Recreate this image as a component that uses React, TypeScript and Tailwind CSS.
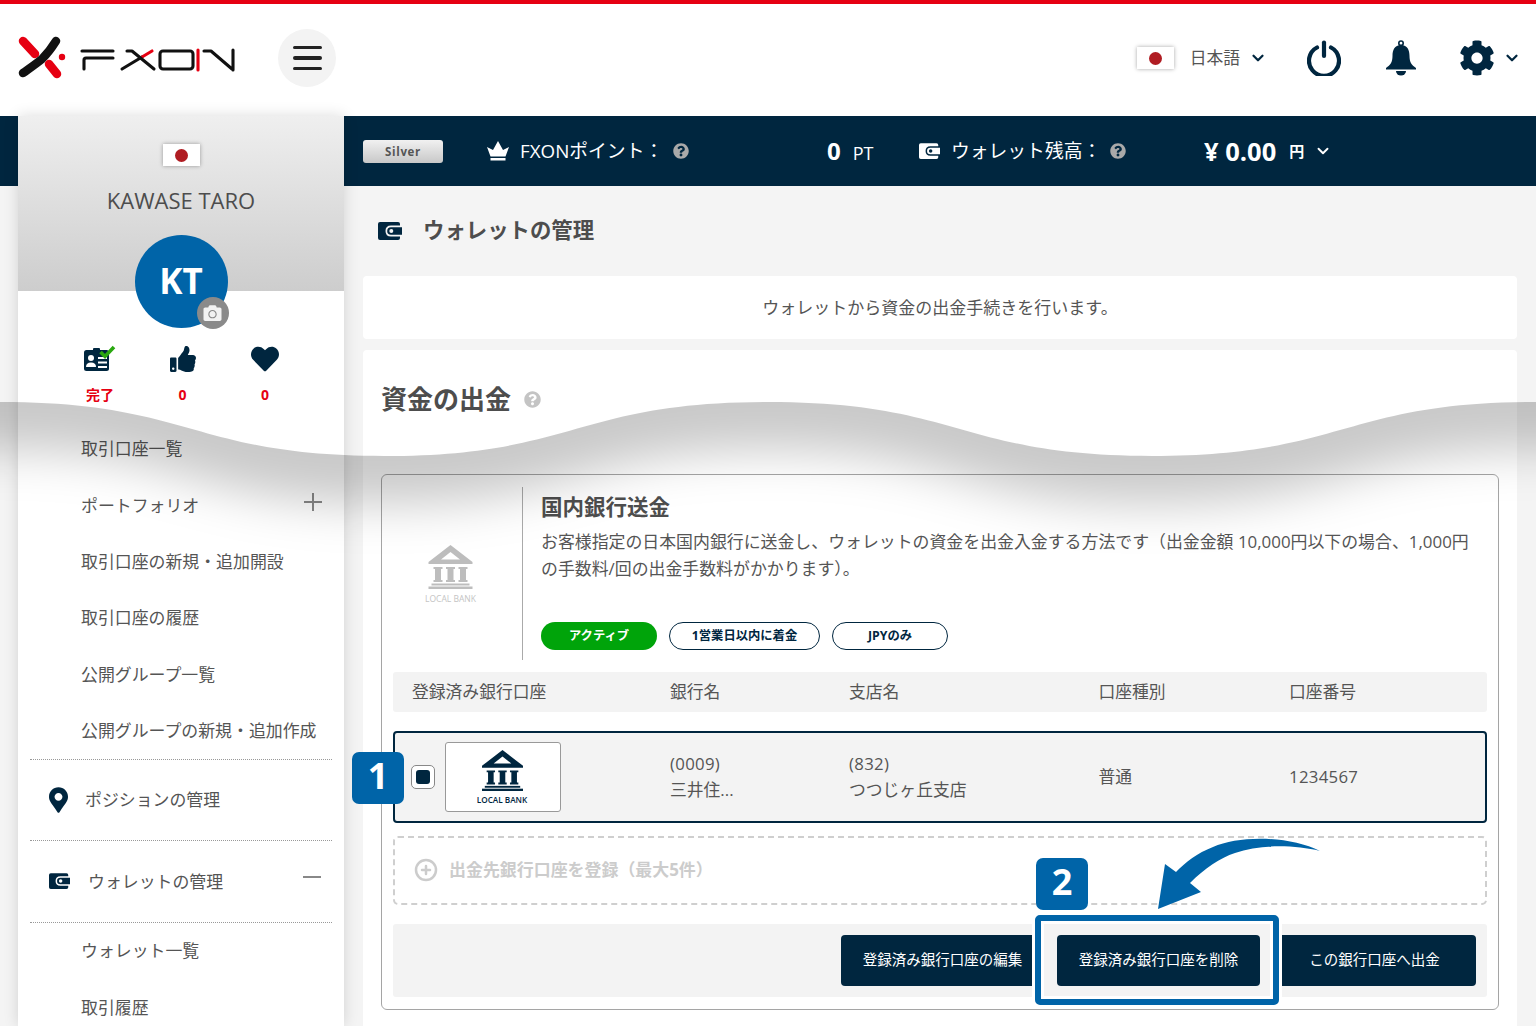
import { ChevronDown, CirclePlus } from "lucide-react";
import { FaCamera, FaCog, FaHeart, FaMapMarkerAlt, FaQuestionCircle, FaThumbsUp } from "react-icons/fa";

const NAVY = "#00263f";

function Flag() {
  return (
    <span className="flex h-[22px] w-[37px] items-center justify-center bg-white shadow-[0_0_4px_rgba(0,0,0,0.35)]">
      <span className="h-[13px] w-[13px] rounded-full bg-[#b01c22]" />
    </span>
  );
}

function Logo() {
  return (
    <svg width="220" height="46" viewBox="0 0 220 46" fill="none" role="img" aria-label="FXON">
      <g strokeLinecap="round" strokeWidth="8.5">
        <path d="M5 6 L17 19" stroke="#e60012" />
        <path d="M38 6 C33 14 29 19 24 24 C18 29 12 33 5 38" stroke="#111" />
        <path d="M31 29 L39 39" stroke="#e60012" />
      </g>
      <circle cx="44" cy="22" r="3.2" fill="#e60012" />
      <g strokeWidth="3.1" strokeLinecap="round" strokeLinejoin="round" transform="translate(0,-2)">
        <path d="M64 18 H95" stroke="#111" />
        <path d="M66 36 V27 Q66 25 68 25 H95" stroke="#111" />
        <path d="M104 36 L124 24" stroke="#111" />
        <path d="M124 24 L134 18" stroke="#e60012" />
        <path d="M109 18 H114 L136 36" stroke="#111" />
        <rect x="142" y="18" width="33" height="18" rx="3" stroke="#111" />
        <path d="M180 17 V37" stroke="#e60012" />
        <path d="M186 18 H193 L214 36 M215 17 V37" stroke="#111" />
      </g>
    </svg>
  );
}

function Wallet({ className, cut = NAVY, color = NAVY }: { className?: string; cut?: string; color?: string }) {
  return (
    <svg className={className} viewBox="0 0 24 18" aria-hidden="true">
      <path d="M2 0 H20 Q22 0 22 2 V3.500 H13 Q7.500 3.500 7.500 9 Q7.500 14.500 13 14.500 H22 V16 Q22 18 20 18 H2 Q0 18 0 16 V2 Q0 0 2 0Z" fill={color} />
      <path d="M13 5.200 H24 V12.800 H13 Q9.200 12.800 9.200 9 Q9.200 5.200 13 5.200Z" fill={color} />
      <circle cx="13.300" cy="9" r="2" fill={cut} />
    </svg>
  );
}

function Bank({ className, color }: { className?: string; color: string }) {
  return (
    <svg className={className} viewBox="0 0 44 44" fill={color} aria-hidden="true">
      <path fillRule="evenodd" d="M22 0 L44 17 V19 H0 V17 Z M22 7 L12.500 14.500 H31.500 Z" />
      <path d="M5 22 H14 V24 H12.500 V35 H14 V37 H5 V35 H6.500 V24 H5Z M17.500 22 H26.500 V24 H25 V35 H26.500 V37 H17.500 V35 H19 V24 H17.500Z M30 22 H39 V24 H37.500 V35 H39 V37 H30 V35 H31.500 V24 H30Z" />
      <rect x="3" y="38.500" width="38" height="2" />
      <rect y="41.500" width="44" height="2.500" />
    </svg>
  );
}

function IdCard() {
  return (
    <svg width="32" height="28" viewBox="0 0 32 28" aria-hidden="true">
      <rect x="0" y="5" width="25" height="21" rx="2.500" fill={NAVY} />
      <rect x="9" y="3" width="7" height="3" rx="1" fill={NAVY} />
      <circle cx="7" cy="13" r="3" fill="#fff" />
      <path d="M2 22 Q2 17.500 7 17.500 Q12 17.500 12 22Z" fill="#fff" />
      <path d="M14 13 H23 M14 17.500 H23 M14 22 H23" stroke="#fff" strokeWidth="1.800" />
      <path d="M16.500 7 L21 11.500 L30 2" fill="none" stroke="#2aa810" strokeWidth="3.600" />
    </svg>
  );
}

function Crown() {
  return (
    <svg width="22" height="20" viewBox="0 0 22 20" fill="#fff" aria-hidden="true">
      <path d="M0 6 L6 9 L11 0 L16 9 L22 6 L18.500 15.500 H3.500Z" />
      <rect x="3.500" y="17" width="15" height="2.500" />
    </svg>
  );
}

function Power() {
  return (
    <svg width="34" height="36" viewBox="0 0 34 36" fill="none" stroke={NAVY} strokeWidth="4.200" strokeLinecap="round" aria-hidden="true">
      <path d="M17 2.500 V16" />
      <path d="M10 7.500 A15 15 0 1 0 24 7.500" />
    </svg>
  );
}

function Bell() {
  return (
    <svg width="32" height="36" viewBox="0 0 32 36" aria-hidden="true">
      <circle cx="16" cy="3.200" r="2.200" fill="none" stroke={NAVY} strokeWidth="1.600" />
      <path d="M16 5 C9.500 5 7.500 10 7.500 16 C7.500 22 5.500 25 1 28 V29.500 H31 V28 C26.500 25 24.500 22 24.500 16 C24.500 10 22.500 5 16 5Z" fill={NAVY} />
      <path d="M11 31 H21 A5 4.500 0 0 1 11 31Z" fill={NAVY} />
    </svg>
  );
}

function SubItem({ label, extra }: { label: string; extra?: React.ReactNode }) {
  return (
    <div className="flex h-[56.300px] items-center justify-between pl-[63px] pr-[22px] text-[16.900px]">
      <span>{label}</span>
      {extra}
    </div>
  );
}

function Sidebar() {
  return (
    <aside className="relative z-10 h-[910px] w-[326px] shrink-0 bg-white shadow-[0_0_14px_rgba(0,0,0,0.14)]">
      <div className="flex h-[175px] flex-col items-center bg-gradient-to-b from-[#efefef] to-[#cdcdcd] pt-[28px]">
        <Flag />
        <p className="mt-[19px] text-[22px] leading-[30px] text-[#4d4d4d]">KAWASE TARO</p>
      </div>
      <div className="relative mx-auto -mt-[56px] flex h-[93px] w-[93px] items-center justify-center rounded-full bg-[#0064a8] text-[35px] font-bold text-white">
        KT
        <span className="absolute -bottom-[1px] -right-[1px] flex h-[32px] w-[32px] items-center justify-center rounded-full bg-[#8a8a8a]">
          <FaCamera className="h-[18px] w-[19px] text-[#f2f2f2]" />
        </span>
      </div>
      <div className="ml-[3px] mt-[15px] flex justify-center text-[14px] font-bold text-[#e60012]">
        {[
          { icon: <IdCard />, label: "完了" },
          { icon: <FaThumbsUp className="h-[26px] w-[26px] text-[#00263f]" />, label: "0" },
          { icon: <FaHeart className="h-[28px] w-[28px] text-[#00263f]" />, label: "0" },
        ].map((s, i) => (
          <div key={i} className="flex w-[82.500px] flex-col items-center">
            <div className="flex h-[32px] items-center">{s.icon}</div>
            <span className="mt-[10px] leading-[20px]">{s.label}</span>
          </div>
        ))}
      </div>
      <div className="mt-[16px]">
        <SubItem label="取引口座一覧" />
        <SubItem label="ポートフォリオ" extra={<span className="relative -top-[3px] h-[18px] w-[18px] bg-[linear-gradient(#888,#888),linear-gradient(#888,#888)] bg-[length:18px_2px,2px_18px] bg-center bg-no-repeat" />} />
        <SubItem label="取引口座の新規・追加開設" />
        <SubItem label="取引口座の履歴" />
        <SubItem label="公開グループ一覧" />
        <SubItem label="公開グループの新規・追加作成" />
      </div>
      <div className="mx-[12px] flex h-[82px] items-center border-y border-dotted border-[#999] pl-[19px] text-[16.900px]">
        <FaMapMarkerAlt className="h-[26px] w-[19px] text-[#00263f]" />
        <span className="ml-[17px]">ポジションの管理</span>
      </div>
      <div className="mx-[12px] flex h-[82px] items-center border-b border-dotted border-[#999] pl-[19px] pr-[11px] text-[16.900px]">
        <Wallet className="h-[16px] w-[21px]" cut="#fff" />
        <span className="ml-[18px] flex-1">ウォレットの管理</span>
        <span className="relative -top-[4px] h-[2px] w-[18px] bg-[#888]" />
      </div>
      <div>
        <SubItem label="ウォレット一覧" />
        <SubItem label="取引履歴" />
      </div>
    </aside>
  );
}

function Pill({ label, active }: { label: string; active?: boolean }) {
  return (
    <span className={active
      ? "flex h-[28px] w-[116px] items-center justify-center rounded-full bg-[#00a40a] pt-[1px] text-[12.300px] font-bold text-white"
      : "flex h-[28px] items-center justify-center rounded-full border border-[#00263f] bg-white pt-[1px] text-[12.300px] font-bold text-[#00263f]"}>
      {label}
    </span>
  );
}

function ActionButton({ label, highlight }: { label: string; highlight?: boolean }) {
  return (
    <div className={`relative flex h-[51px] w-[203px] items-center justify-center rounded-[4px] bg-[#00263f] pb-[2px] text-[14.500px] text-white ${highlight ? "z-10" : ""}`}>
      {label}
      {highlight && (
        <span className="pointer-events-none absolute -bottom-[19px] -left-[22px] -right-[19px] -top-[20px] rounded-[5px] border-[6px] border-[#0064a8] shadow-[0_0_0_3px_#fff,inset_0_0_0_3px_#fff]" />
      )}
    </div>
  );
}

function NumberBadge({ n, className }: { n: string; className: string }) {
  return (
    <span className={`absolute flex h-[52px] w-[52px] items-center justify-center rounded-[7px] bg-[#0064a8] pb-[4px] text-[36px] font-bold text-white ${className}`}>
      {n}
    </span>
  );
}

function TopBand() {
  return (
    <div className="flex h-[70px] items-center bg-[#00263f] pl-[19px] text-white">
      <span className="flex h-[23px] w-[80px] items-center justify-center rounded-[3px] bg-gradient-to-b from-[#f1f1f1] to-[#c8c8c8] pt-[2px] text-[11.500px] font-bold tracking-[0.06em] text-[#555]">Silver</span>
      <div className="ml-[44px] flex w-[340px] items-center">
        <Crown />
        <span className="ml-[11px] text-[18.800px]">FXONポイント：</span>
        <FaQuestionCircle className="ml-[10px] h-[16px] w-[16px] text-[#a9a9a9]" />
      </div>
      <div className="flex w-[92px] items-baseline">
        <span className="text-[24px] font-bold">0</span>
        <span className="ml-[12px] text-[18px]">PT</span>
      </div>
      <div className="flex w-[285px] items-center">
        <Wallet className="h-[16px] w-[21px]" cut={NAVY} color="#fff" />
        <span className="ml-[11px] text-[18.800px]">ウォレット残高：</span>
        <FaQuestionCircle className="ml-[9px] h-[16px] w-[16px] text-[#a9a9a9]" />
      </div>
      <div className="flex items-center">
        <span className="text-[25.500px] font-bold">¥ 0.00</span>
        <span className="ml-[13px] text-[15px] font-bold">円</span>
        <ChevronDown className="ml-[10px] h-[18px] w-[18px]" strokeWidth={2.500} />
      </div>
    </div>
  );
}

function WithdrawPanel() {
  return (
    <section className="mt-[11px] rounded-t-[4px] bg-white px-[18px]">
      <div className="flex h-[124px] items-start pt-[29px]">
        <h2 className="text-[26px] font-bold leading-[40px] text-[#4d4d4d]">資金の出金</h2>
        <FaQuestionCircle className="ml-[13px] mt-[12px] h-[17px] w-[17px] text-[#c4c4c4]" />
      </div>
      <div className="h-[536px] rounded-[6px] border border-[#a5a5a5] px-[11px]">
        <div className="flex h-[197px] pt-[12px]">
          <div className="-ml-[11px] flex h-[173px] w-[141px] shrink-0 flex-col items-center justify-center border-r border-[#aaa] pr-[3px] pt-[2px]">
            <Bank className="h-[44px] w-[47px]" color="#bdbdbd" />
            <span className="mt-[4px] text-[8.500px] leading-[12px] text-[#c4c4c4]">LOCAL BANK</span>
          </div>
          <div className="ml-[18px] flex-1">
            <h3 className="text-[21.500px] font-bold leading-[40px] text-[#4d4d4d]">国内銀行送金</h3>
            <p className="mt-[2px] w-[935px] text-[16.900px] leading-[26.500px]">
              お客様指定の日本国内銀行に送金し、ウォレットの資金を出金入金する方法です（出金金額 10,000円以下の場合、1,000円の手数料/回の出金手数料がかかります）。
            </p>
            <div className="mt-[40px] flex gap-[12px]">
              <Pill label="アクティブ" active />
              <span className="w-[151px]"><Pill label="1営業日以内に着金" /></span>
              <span className="w-[116px]"><Pill label="JPYのみ" /></span>
            </div>
          </div>
        </div>

        <div className="flex h-[40px] items-center rounded-[3px] bg-[#f3f3f3] pl-[19px] text-[16.800px]">
          <span className="w-[258px]">登録済み銀行口座</span>
          <span className="w-[179px]">銀行名</span>
          <span className="w-[249.500px]">支店名</span>
          <span className="w-[190.500px]">口座種別</span>
          <span>口座番号</span>
        </div>

        <div className="relative mt-[19px] flex h-[92px] items-center rounded-[4px] border-2 border-[#00263f] bg-[#f3f3f3] text-[16.800px]">
          <NumberBadge n="1" className="-left-[43px] top-[19px]" />
          <span className="ml-[16px] flex h-[24px] w-[24px] items-center justify-center rounded-[5px] border border-[#888] bg-white">
            <span className="h-[14px] w-[14px] rounded-[3px] bg-[#00263f]" />
          </span>
          <div className="ml-[10px] flex h-[70px] w-[116px] flex-col items-center justify-center rounded-[3px] border border-[#999] bg-white pr-[2px] pt-[2px]">
            <Bank className="h-[41px] w-[45px]" color={NAVY} />
            <span className="mt-[3px] text-[8.200px] font-semibold leading-[12px] text-[#00263f]">LOCAL BANK</span>
          </div>
          <div className="ml-[109px] w-[179px] leading-[26px]">
            <div className="tracking-[0.3px]">(0009)</div>
            <div>三井住...</div>
          </div>
          <div className="w-[249.500px] leading-[26px]">
            <div className="tracking-[0.3px]">(832)</div>
            <div>つつじヶ丘支店</div>
          </div>
          <span className="w-[190.500px]">普通</span>
          <span className="tracking-[0.3px]">1234567</span>
        </div>

        <div className="mt-[13px] flex h-[69px] items-center rounded-[5px] border-2 border-dashed border-[#cfcfcf] pb-[2px] pl-[19px] text-[#cccccc]">
          <CirclePlus className="h-[24px] w-[24px]" strokeWidth={2.500} />
          <span className="ml-[11px] text-[16.950px] font-bold">出金先銀行口座を登録（最大5件）</span>
        </div>

        <div className="mt-[19px] flex h-[73px] items-center justify-end gap-[13px] rounded-[3px] bg-[#f3f3f3] pr-[11px]">
          <ActionButton label="登録済み銀行口座の編集" />
          <ActionButton label="登録済み銀行口座を削除" highlight />
          <ActionButton label="この銀行口座へ出金" />
        </div>
      </div>
      <div className="h-[20px]" />
    </section>
  );
}

export default function App() {
  return (
    <div className="relative h-[1026px] w-[1536px] overflow-hidden bg-[#f4f4f4] [font-family:'Open_Sans','Noto_Sans_CJK_JP',sans-serif] text-[#555]">
      <header className="flex h-[116px] items-center border-t-4 border-[#e60012] bg-white pb-[4px]">
        <div className="ml-[18px]"><Logo /></div>
        <button className="ml-[40px] flex h-[58px] w-[58px] flex-col items-center justify-center gap-[7px] rounded-full bg-[#f3f3f3]">
          <span className="h-[3.500px] w-[29px] rounded-full bg-[#222]" />
          <span className="h-[3.500px] w-[29px] rounded-full bg-[#222]" />
          <span className="h-[3.500px] w-[29px] rounded-full bg-[#222]" />
        </button>
        <div className="ml-auto flex items-center">
          <Flag />
          <span className="ml-[16px] text-[16.800px]">日本語</span>
          <ChevronDown className="ml-[9px] h-[18px] w-[18px] text-[#00263f]" strokeWidth={3} />
          <span className="ml-[40px]"><Power /></span>
          <span className="ml-[44px]"><Bell /></span>
          <FaCog className="ml-[42px] h-[36px] w-[36px] text-[#00263f]" />
          <ChevronDown className="ml-[8px] mr-[15px] h-[18px] w-[18px] text-[#00263f]" strokeWidth={3} />
        </div>
      </header>

      <div className="flex">
        <div className="w-[18px] shrink-0"><div className="h-[70px] bg-[#00263f]" /></div>
        <Sidebar />
        <main className="min-w-0 flex-1">
          <TopBand />
          <div className="px-[19px]">
            <div className="flex h-[90px] items-center pb-[1px]">
              <Wallet className="ml-[15px] h-[18px] w-[24px]" cut="#f4f4f4" />
              <h1 className="ml-[21px] text-[21.400px] font-bold text-[#4d4d4d]">ウォレットの管理</h1>
            </div>
            <div className="flex h-[63px] items-center justify-center rounded-[4px] bg-white text-[17px]">
              ウォレットから資金の出金手続きを行います。
            </div>
            <WithdrawPanel />
          </div>
        </main>
      </div>

      {/* soft wave-shaped shade lying across the page */}
      <svg className="pointer-events-none absolute left-0 top-[402px] z-20" width="1536" height="240" viewBox="0 0 1536 240" aria-hidden="true">
        <defs>
          <clipPath id="below-wave">
            <path d="M0 0 C192 0 192 54 384 54 S576 0 768 0 S960 54 1152 54 S1344 0 1536 0 V240 H0Z" />
          </clipPath>
          <filter id="soft" x="-5%" y="-50%" width="110%" height="200%">
            <feGaussianBlur stdDeviation="24" />
          </filter>
        </defs>
        <g clipPath="url(#below-wave)">
          <path d="M-100 -60 H1636 V48 L1536 48 C1344 48 1344 102 1152 102 S960 48 768 48 S576 102 384 102 S192 48 0 48 L-100 48Z" fill="rgba(0,0,0,0.21)" filter="url(#soft)" />
        </g>
      </svg>

      <NumberBadge n="2" className="left-[1036px] top-[858px] z-30" />

      <svg className="pointer-events-none absolute left-[1150px] top-[830px] z-30" width="180" height="90" viewBox="1150 830 180 90" aria-hidden="true">
        <path d="M1320 851 C1290 836 1240 835 1213 847 C1197 853 1186 862 1176 872 L1165 864 L1158 909 L1201 892 L1190 883 C1205 868 1220 858 1235 853 C1260 844 1295 845 1320 851Z" fill="#0064a8" />
      </svg>
    </div>
  );
}
